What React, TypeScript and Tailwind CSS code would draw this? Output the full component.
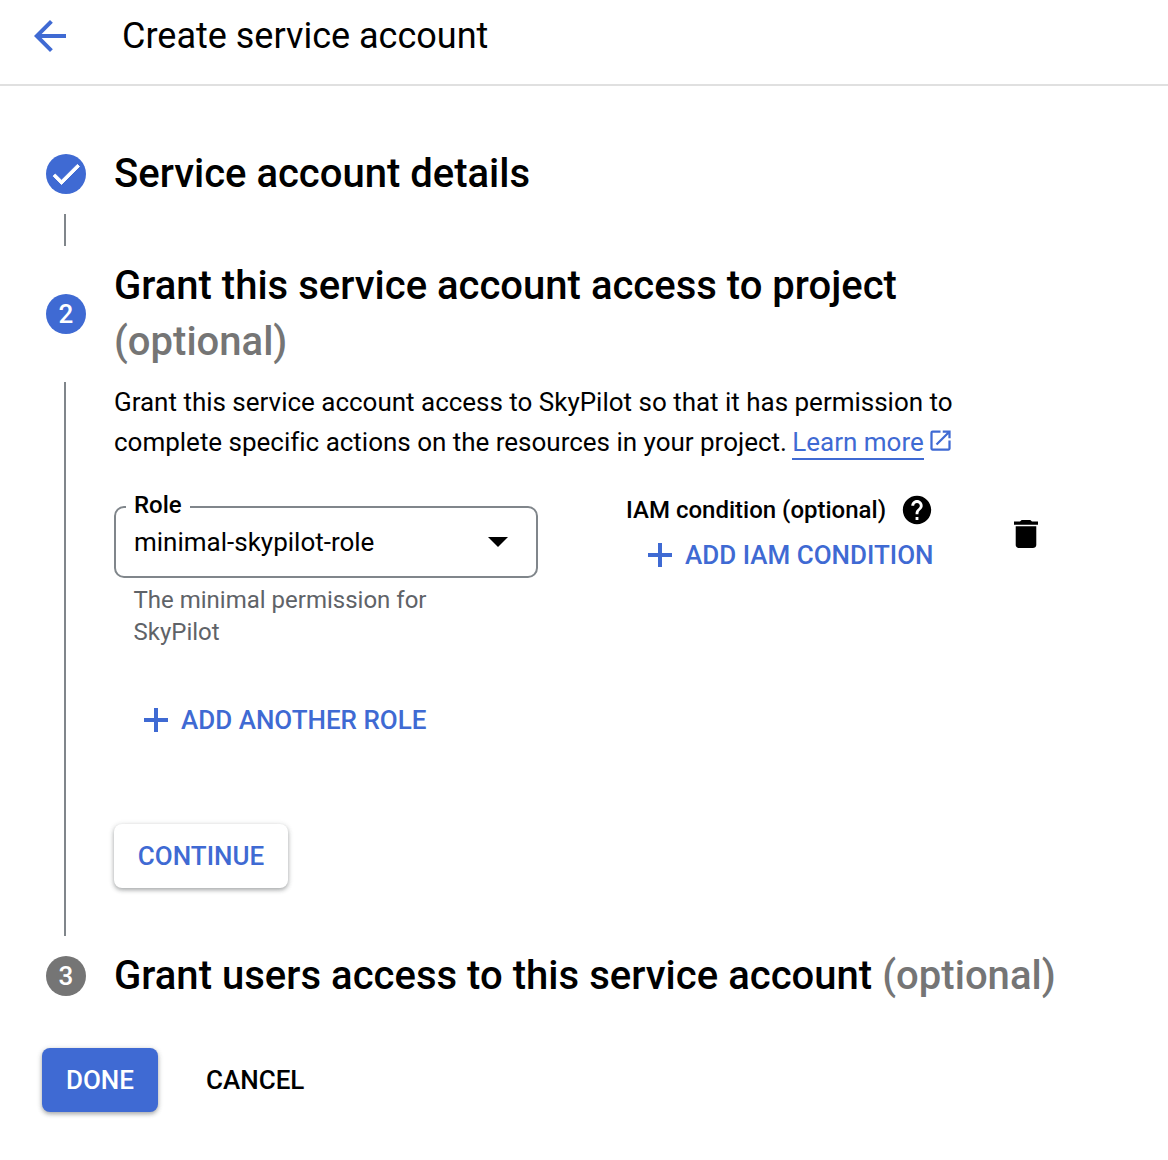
const BLUE = "#3f6ad3";

function Plus() {
  return (
    <svg viewBox="0 0 24 24" className="w-6 h-6 shrink-0" fill={BLUE}>
      <path d="M0 10h10V0h4v10h10v4H14v10h-4V14H0z" />
    </svg>
  );
}

function StepCircle({ children, gray }: { children: React.ReactNode; gray?: boolean }) {
  return (
    <div
      className={`w-10 h-10 rounded-full shrink-0 flex items-center justify-center text-white text-[26px] font-medium ${
        gray ? "bg-[#757575]" : "bg-[#3f6ad3]"
      }`}
    >
      {children}
    </div>
  );
}

export default function App() {
  return (
    <div className="w-[1168px] h-[1160px] bg-white text-black overflow-hidden font-['Roboto',sans-serif]">
      <header className="h-[86px] border-b-2 border-[#e0e0e0] flex items-center pb-3 pl-[26px]">
        <svg viewBox="0 0 24 24" className="w-12 h-12 shrink-0" fill="#3f6ad3">
          <path d="M20 11H7.83l5.59-5.59L12 4l-8 8 8 8 1.41-1.41L7.83 13H20v-2z" />
        </svg>
        <h1 className="ml-[48px] text-[36px] leading-[44px] font-normal">Create service account</h1>
      </header>

      <main className="pl-[46px] pt-[60px]">
        <section className="flex items-center gap-7 h-14">
          <StepCircle>
            <svg viewBox="0 0 24 24" className="w-9 h-9" fill="#fff" stroke="#fff" strokeWidth="0.6">
              <path d="M9 16.17L4.83 12l-1.41 1.41L9 19 21 7l-1.41-1.41z" />
            </svg>
          </StepCircle>
          <h2 className="text-[40px] leading-[56px] font-medium">Service account details</h2>
        </section>

        <div className="ml-[18px] mt-3 w-0.5 h-8 bg-[#80868b]" />

        <section className="flex items-center gap-7 mt-3">
          <StepCircle>2</StepCircle>
          <h2 className="text-[40px] leading-[56px] font-medium tracking-[0.01px] w-[860px]">
            Grant this service account access to project <span className="text-[#757575]">(optional)</span>
          </h2>
        </section>

        <div className="flex mt-3">
          <div className="ml-[18px] w-0.5 h-[554px] bg-[#80868b] shrink-0" />
          <div className="ml-[48px] w-[960px]">
            <p className="text-[26px] leading-10 tracking-[-0.012px]">
              Grant this service account access to SkyPilot so that it has permission to
              <br />
              complete specific actions on the resources in your project.{" "}
              <a className="inline-block -ml-px leading-8 border-b-2 border-[#3f6ad3] text-[#3f6ad3]">Learn more</a>
              <svg viewBox="0 0 24 24" className="inline-block w-[27px] h-[27px] ml-[3px] align-[-3px]" fill="#3f6ad3">
                <path d="M19 19H5V5h7V3H5a2 2 0 0 0-2 2v14c0 1.1.89 2 2 2h14c1.1 0 2-.9 2-2v-7h-2v7zM14 3v2h3.59l-9.83 9.83 1.41 1.41L19 6.41V10h2V3h-7z" />
              </svg>
            </p>

            <div className="flex mt-11">
              <div className="w-[424px] shrink-0">
                <div className="relative h-[72px] border-2 border-[#80868b] rounded-[10px] flex items-center justify-between pl-[18px] pr-[28px]">
                  <span className="absolute left-[10px] -top-[17px] bg-white px-[8px] text-[24px] leading-[28px] font-medium">
                    Role
                  </span>
                  <span className="text-[26px] leading-9">minimal-skypilot-role</span>
                  <svg viewBox="0 0 20 10" className="w-5 h-2.5" fill="#000">
                    <path d="M0 0h20L10 10z" />
                  </svg>
                </div>
                <p className="ml-[19.5px] mt-1.5 text-[24px] leading-8 text-[#5f6368] w-[320px]">
                  The minimal permission for SkyPilot
                </p>
                <button className="flex items-center gap-[13px] ml-[30px] mt-[54px] h-9 text-[26px] font-medium text-[#3f6ad3]">
                  <Plus />
                  ADD ANOTHER ROLE
                </button>
              </div>

              <div className="ml-[88px] w-[340px] shrink-0">
                <div className="flex items-center h-8 -mt-3">
                  <span className="text-[24px] leading-8 font-medium">IAM condition (optional)</span>
                  <svg viewBox="0 0 24 24" className="w-[34px] h-[34px] ml-[14px]" fill="#000">
                    <path d="M12 2C6.48 2 2 6.48 2 12s4.48 10 10 10 10-4.48 10-10S17.52 2 12 2zm1 17h-2v-2h2v2zm2.07-7.75l-.9.92C13.45 12.9 13 13.5 13 15h-2v-.5c0-1.1.45-2.1 1.17-2.83l1.24-1.26c.37-.36.59-.86.59-1.41 0-1.1-.9-2-2-2s-2 .9-2 2H8c0-2.21 1.79-4 4-4s4 1.79 4 4c0 .88-.36 1.68-.93 2.25z" />
                  </svg>
                </div>
                <button className="flex items-center gap-[13px] ml-[22px] mt-[11px] h-9 text-[26px] font-medium text-[#3f6ad3]">
                  <Plus />
                  ADD IAM CONDITION
                </button>
              </div>

              <svg
                viewBox="5 3 14 18"
                preserveAspectRatio="none"
                className="w-6 h-7 ml-[48px] mt-[14px] shrink-0"
                fill="#000"
              >
                <path d="M6 19c0 1.1.9 2 2 2h8c1.1 0 2-.9 2-2V7H6v12zM19 4h-3.5l-1-1h-5l-1 1H5v2h14V4z" />
              </svg>
            </div>

            <button className="mt-[86px] w-[174px] h-16 rounded-lg bg-white text-[26px] font-medium text-[#3f6ad3] shadow-[0_2px_4px_rgba(60,64,67,0.4),0_1px_6px_rgba(60,64,67,0.12)]">
              CONTINUE
            </button>
          </div>
        </div>

        <section className="flex items-center gap-7 mt-3 h-14">
          <StepCircle gray>3</StepCircle>
          <h2 className="text-[40px] leading-[56px] font-medium tracking-[0.03px] whitespace-nowrap">
            Grant users access to this service account <span className="text-[#757575]">(optional)</span>
          </h2>
        </section>

        <div className="flex items-center -ml-1 mt-11">
          <button className="w-[116px] h-16 rounded-lg bg-[#3f6ad3] text-white text-[26px] font-medium shadow-[0_2px_4px_rgba(60,64,67,0.4),0_1px_6px_rgba(60,64,67,0.12)]">
            DONE
          </button>
          <button className="ml-12 text-[26px] font-medium text-black">CANCEL</button>
        </div>
      </main>
    </div>
  );
}
